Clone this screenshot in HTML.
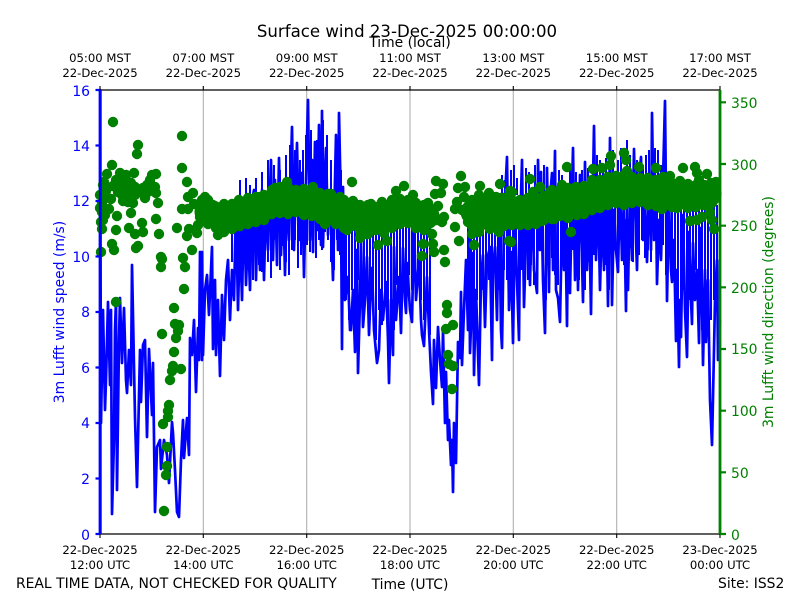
<!DOCTYPE html>
<html><head><meta charset="utf-8"><style>
html,body{margin:0;padding:0;background:#fff}
svg{display:block}
text{font-family:"DejaVu Sans",sans-serif;fill:#000}
.s{font-size:11.65px;text-anchor:middle}
.m{font-size:13.9px}
.b{fill:#00f;font-size:13.9px;text-anchor:end}
.g{fill:#008000;font-size:13.9px}
</style></head><body>
<svg width="800" height="600" viewBox="0 0 800 600" xmlns="http://www.w3.org/2000/svg">
<rect width="800" height="600" fill="#fff"/>
<path d="M203.3 90V534M306.7 90V534M410 90V534M513.3 90V534M616.7 90V534" stroke="#b0b0b0" stroke-width="1.1" fill="none"/>
<path fill="none" stroke="#00f" stroke-width="2.7" stroke-linejoin="round" d="M100 534L100 90 101 423 103 310 105 410 106 380 108 302 110 385 111 310 112 514 114 440 115 330 116 300 117 490 119 340 120 298 122 363 124 308 126 380 127 393 129 350 131 385 132 265 135 417 137 487 140 350 141 402 143 345 145 340 147 437 149 349 152 415 153 363 155 512 157 447 160 440 161 469 164 440 167 455 169 483 172 422 173 433 175 470 177 512 179 517 181 460 183 420 184 458 187 418 189 455 190 338 192 355 194 320 196 392 198 328 199 360 200 252 202 360 202 252 203 355 205 290 207 275 209 315 212 247 213 349 215 280 216 355 218 300 220 376 222 295 224 340 226 280 228 260 230 320 232 270 234 300 236 205 238 310 240 230 242 300 244 203 246 285 248 230 250 290 252 200 254 190 256 280 258 200 260 270 262 190 264 280 266 200 268 250 271 160 273 260 275 180 277 265 279 158 281 255 283 185 285 275 287 190 289 240 292 127 294 250 297 143 299 240 302 173 304 277 306 180 308 100 310 240 312 160 313 252 315 142 317 230 319 125 321 245 322 111 323 247 325 170 326 148 328 235 330 190 333 280 335 180 336 135 338 250 339 113 341 210 342 349 343 187 345 300 348 277 350 330 351 330 353 290 355 352 357 250 358 373 360 300 361 242 363 327 365 300 367 257 369 335 371 280 372 268 374 330 377 363 379 350 381 290 383 320 386 282 388 340 389 383 391 300 393 355 394 247 396 320 399 277 401 333 403 248 405 300 406 313 407 263 410 310 412 322 414 222 416 300 419 260 421 320 422 335 424 346 427 277 429 330 431 372 433 404 434 340 436 388 438 327 440 360 442 387 443 330 445 423 446 372 448 440 449 420 451 465 452 440 453 492 454 423 456 463 458 342 460 358 461 292 462 365 464 310 466 260 468 330 469 232 470 353 472 300 473 253 474 375 476 290 479 385 481 280 483 255 485 327 487 260 490 247 492 360 493 270 495 247 497 320 499 200 501 330 502 348 504 220 507 157 509 310 511 252 513 343 515 220 517 280 519 340 520 230 522 160 524 307 526 240 528 200 530 285 532 190 534 270 537 293 538 160 540 250 541 172 543 280 545 333 547 168 549 292 550 200 552 173 553 270 555 151 556 290 558 298 560 322 562 220 564 270 565 200 567 326 568 230 570 293 572 190 573 148 575 280 577 210 578 290 580 175 582 260 583 302 585 162 587 270 589 200 591 314 592 240 594 126 596 260 598 190 600 290 602 210 604 270 606 180 608 306 610 138 612 305 614 210 616 250 618 272 620 180 622 260 624 200 626 311 627 220 628 290 630 190 632 260 634 149 636 240 637 270 639 180 641 157 643 240 645 200 647 262 649 190 651 250 652 113 654 240 656 200 657 284 659 220 661 260 663 180 665 101 667 301 669 200 671 270 672 282 674 240 676 341 677 270 679 367 680 300 681 337 683 215 685 310 687 357 689 232 691 300 692 324 693 243 695 300 697 270 699 343 701 228 703 365 705 270 706 342 708 280 710 400 712 445 714 350 715 300 717 260 718 360 720 320"/>
<path fill="none" stroke="#00f" stroke-width="2" d="M232 205V262M235 205V250M238 205V275M241 205V255M244 205V240M247 205V270M250 205V250M253 205V280M256 205V245M259 205V265M262 205V272M265 205V248M268 205V262M271 205V278M274 205V240M277 205V258M280 205V270M283 205V246M286 205V262M289 205V275M292 205V250M295 205V240M298 205V268M301 205V255M304 205V270M307 205V245M310 205V252M313 205V235M316 205V258M319 205V240M322 205V250M325 205V232M328 205V240M331 205V262M334 205V270M337 205V240M340 205V255M343 205V285M346 205V300M349 205V320M352 205V290M355 205V330M358 205V280M361 205V270M364 205V315M367 205V285M370 205V320M373 205V300M376 205V340M379 205V310M382 205V325M385 205V295M388 205V350M391 205V305M394 205V330M397 205V285M400 205V315M403 205V290M406 205V300M409 205V275M412 205V290M415 205V265M418 205V280M421 205V300M424 205V320M427 205V285M430 205V335M468 205V280M471 205V310M474 205V330M477 205V300M480 205V340M483 205V290M486 205V300M489 205V280M492 205V320M495 205V270M498 205V290M501 205V300M504 205V270M507 205V280M510 205V300M513 205V310M516 205V265M519 205V300M522 205V270M525 205V260M528 205V280M531 205V265M534 205V285M537 205V260M540 205V250M543 205V275M546 205V300M549 205V262M552 205V258M555 205V275M558 205V285M561 205V262M564 205V250M567 205V290M570 205V268M573 205V250M576 205V270M579 205V280M582 205V255M585 205V290M588 205V262M591 205V280M594 205V255M597 205V245M600 205V270M603 205V255M606 205V265M609 205V290M612 205V280M615 205V250M618 205V260M621 205V240M624 205V265M627 205V285M630 205V248M633 205V262M636 205V245M639 205V255M642 205V240M645 205V258M648 205V250M651 205V262M654 205V240M657 205V270M660 205V250M663 205V245M666 205V275M669 205V255M672 205V270M675 205V300M678 205V320M681 205V310M684 205V290M687 205V320M690 205V300M693 205V280M696 205V270M699 205V310M702 205V330M705 205V300M708 205V290M711 205V320M714 205V300M717 205V290M502 195V175M505 195V180M511 195V170M514 195V165M517 195V178M526 195V168M529 195V172M535 195V165M544 195V165M547 195V168M559 195V170M562 195V175M570 195V165M576 195V172M582 195V170M588 195V168M597 195V155M600 195V160M603 195V170M606 195V158M613 195V150M618 195V160M621 195V148M627 195V140M630 195V155M637 195V160M643 195V165M646 195V155M649 195V150M655 195V148M658 195V150M661 195V165M240 200V180M246 200V178M250 200V185M256 200V178M262 200V172M268 200V160M274 200V165M280 200V170M286 200V155M290 200V145M295 200V150M300 200V160M303 200V150M306 200V135M311 200V130M317 200V140M323 200V120M327 200V135M331 200V160M337 200V145M341 200V170"/>
<path fill="none" stroke="#008000" stroke-width="27" stroke-linejoin="round" stroke-linecap="round" d="M208 212 220 218 240 213 260 209 280 200 300 201 320 205 340 212 360 217 380 220 400 211 420 215 426 216M474 212 500 210 520 212 540 210 560 203 580 202 600 194 620 190 640 191 660 193 680 195 700 196 708 194"/>
<path fill="none" stroke="#008000" stroke-width="10.4" stroke-linecap="round" d="M113 122h0M138 145h0M137 154h0M182 136h0M112 165h0M182 168h0M107 174h0M120 173h0M123 175h0M134 173h0M152 175h0M156 174h0M187 182h0M104 182h0M122 182h0M131 183h0M153 187h0M147 185h0M123 187h0M106 191h0M130 192h0M140 192h0M148 192h0M156 193h0M122 195h0M127 195h0M193 193h0M188 197h0M111 199h0M145 198h0M123 201h0M128 202h0M133 203h0M102 203h0M158 203h0M205 197h0M202 200h0M207 202h0M239 200h0M224 204h0M194 204h0M213 207h0M182 209h0M188 209h0M109 209h0M102 212h0M131 213h0M117 216h0M103 220h0M156 219h0M142 223h0M102 229h0M116 230h0M129 228h0M135 234h0M143 232h0M159 234h0M177 228h0M189 229h0M187 236h0M197 233h0M198 225h0M200 217h0M112 244h0M114 250h0M138 246h0M136 248h0M101 252h0M192 250h0M161 257h0M162 259h0M161 267h0M183 258h0M185 267h0M184 289h0M174 308h0M116 302h0M215 217h0M218 235h0M225 213h0M233 228h0M227 225h0M237 218h0M247 223h0M253 208h0M262 217h0M260 197h0M275 188h0M280 187h0M287 182h0M305 190h0M305 213h0M175 324h0M179 325h0M178 331h0M162 334h0M176 338h0M174 352h0M173 366h0M172 371h0M181 369h0M170 380h0M169 405h0M168 411h0M168 417h0M163 424h0M167 447h0M167 466h0M166 475h0M164 511h0M304 191h0M313 187h0M352 182h0M404 186h0M396 191h0M413 195h0M436 181h0M443 184h0M435 194h0M441 193h0M438 206h0M428 203h0M461 176h0M458 188h0M465 187h0M464 197h0M457 202h0M480 186h0M500 184h0M510 191h0M489 193h0M479 195h0M501 198h0M511 204h0M455 209h0M462 210h0M472 210h0M483 212h0M502 213h0M444 217h0M437 220h0M442 222h0M477 222h0M468 222h0M455 227h0M490 229h0M499 232h0M472 234h0M479 232h0M459 241h0M474 245h0M509 241h0M444 250h0M434 252h0M433 244h0M432 234h0M423 244h0M422 256h0M445 262h0M447 305h0M387 241h0M378 245h0M365 234h0M360 238h0M347 230h0M325 224h0M371 204h0M382 202h0M353 201h0M331 194h0M340 197h0M447 313h0M453 325h0M446 329h0M448 355h0M449 364h0M453 366h0M452 389h0M624 153h0M611 156h0M626 160h0M567 167h0M683 168h0M695 167h0M593 169h0M602 168h0M610 165h0M707 174h0M530 179h0M656 168h0M639 167h0M627 171h0M670 176h0M663 177h0M697 173h0M716 182h0M711 183h0M699 180h0M679 184h0M562 185h0M540 187h0M512 192h0M533 192h0M550 192h0M555 192h0M577 192h0M583 188h0M617 185h0M710 204h0M690 221h0M697 220h0M702 217h0M712 220h0M714 229h0M710 212h0M571 232h0M511 242h0M528 225h0M542 221h0M554 219h0M577 215h0M662 209h0M677 208h0M619 198h0M637 193h0M650 198h0M692 203h0M116 180h0M118 186h0M126 180h0M128 186h0M135 187h0M118 192h0M135 195h0M125 190h0M113 186h0M126 175h0M150 180h0M155 187h0M143 188h0M103 185h0M100 195h0M103 200h0M100 208h0M105 215h0M101 222h0M208 200h0M208 224h0M216 208h0M216 228h0M224 207h0M224 232h0M232 204h0M232 229h0M240 201h0M240 226h0M248 198h0M248 224h0M256 197h0M256 222h0M264 195h0M264 220h0M272 190h0M272 214h0M280 188h0M280 213h0M288 187h0M288 214h0M296 190h0M296 212h0M304 189h0M304 215h0M312 191h0M312 216h0M320 193h0M320 219h0M328 194h0M328 221h0M336 199h0M336 224h0M344 200h0M344 228h0M352 203h0M352 226h0M360 205h0M360 231h0M368 205h0M368 234h0M376 207h0M376 230h0M384 205h0M384 233h0M392 200h0M392 228h0M400 199h0M400 224h0M408 200h0M408 223h0M416 203h0M416 228h0M424 205h0M424 230h0M472 200h0M472 226h0M480 197h0M480 227h0M488 198h0M488 224h0M496 197h0M496 225h0M504 198h0M504 226h0M512 200h0M512 225h0M520 200h0M520 225h0M528 198h0M528 222h0M536 197h0M536 224h0M544 196h0M544 220h0M552 190h0M552 219h0M560 190h0M560 216h0M568 188h0M568 218h0M576 187h0M576 213h0M584 186h0M584 214h0M592 180h0M592 210h0M600 180h0M600 208h0M608 177h0M608 205h0M616 176h0M616 203h0M624 175h0M624 205h0M632 177h0M632 203h0M640 178h0M640 202h0M648 178h0M648 205h0M656 180h0M656 206h0M664 182h0M664 204h0M672 183h0M672 207h0M680 181h0M680 205h0M688 184h0M688 208h0M696 185h0M696 207h0M704 185h0M704 205h0M712 187h0M712 203h0"/>
<path d="M100 90H720M100 534H720" stroke="#000" stroke-width="1.2" fill="none"/>
<path d="M100 90V86M203.3 90V86M306.7 90V86M410 90V86M513.3 90V86M616.7 90V86M720 90V86M100 534V538M203.3 534V538M306.7 534V538M410 534V538M513.3 534V538M616.7 534V538M720 534V538" stroke="#000" stroke-width="1.1" fill="none"/>
<path d="M100.3 90V534" stroke="#00f" stroke-width="2.8" fill="none"/>
<path d="M720 90V534" stroke="#008000" stroke-width="2.8" fill="none"/>
<path d="M95.5 90H100M95.5 145.5H100M95.5 201H100M95.5 256.5H100M95.5 312H100M95.5 367.5H100M95.5 423H100M95.5 478.5H100M95.5 534H100" stroke="#00f" stroke-width="2.2" fill="none"/>
<path d="M720 102.3H726M720 164H726M720 225.7H726M720 287.3H726M720 349H726M720 410.7H726M720 472.3H726M720 534H726" stroke="#008000" stroke-width="2.2" fill="none"/>
<text class="b" x="90" y="96">16</text><text class="b" x="90" y="151">14</text><text class="b" x="90" y="206">12</text><text class="b" x="90" y="262">10</text><text class="b" x="90" y="317">8</text><text class="b" x="90" y="373">6</text><text class="b" x="90" y="428">4</text><text class="b" x="90" y="484">2</text><text class="b" x="90" y="540">0</text>
<text class="g" x="731" y="108">350</text><text class="g" x="731" y="170">300</text><text class="g" x="731" y="231">250</text><text class="g" x="731" y="293">200</text><text class="g" x="731" y="354">150</text><text class="g" x="731" y="416">100</text><text class="g" x="731" y="478">50</text><text class="g" x="731" y="540">0</text>
<text x="407" y="37" style="font-size:16.6px;text-anchor:middle">Surface wind 23-Dec-2025 00:00:00</text>
<text class="m" x="410" y="47" text-anchor="middle">Time (local)</text>
<g>
<text class="s" x="100" y="62">05:00 MST</text><text class="s" x="100" y="77">22-Dec-2025</text>
<text class="s" x="203.3" y="62">07:00 MST</text><text class="s" x="203.3" y="77">22-Dec-2025</text>
<text class="s" x="306.7" y="62">09:00 MST</text><text class="s" x="306.7" y="77">22-Dec-2025</text>
<text class="s" x="410" y="62">11:00 MST</text><text class="s" x="410" y="77">22-Dec-2025</text>
<text class="s" x="513.3" y="62">13:00 MST</text><text class="s" x="513.3" y="77">22-Dec-2025</text>
<text class="s" x="616.7" y="62">15:00 MST</text><text class="s" x="616.7" y="77">22-Dec-2025</text>
<text class="s" x="720" y="62">17:00 MST</text><text class="s" x="720" y="77">22-Dec-2025</text>
</g>
<g>
<text class="s" x="100" y="554">22-Dec-2025</text><text class="s" x="100" y="569">12:00 UTC</text>
<text class="s" x="203.3" y="554">22-Dec-2025</text><text class="s" x="203.3" y="569">14:00 UTC</text>
<text class="s" x="306.7" y="554">22-Dec-2025</text><text class="s" x="306.7" y="569">16:00 UTC</text>
<text class="s" x="410" y="554">22-Dec-2025</text><text class="s" x="410" y="569">18:00 UTC</text>
<text class="s" x="513.3" y="554">22-Dec-2025</text><text class="s" x="513.3" y="569">20:00 UTC</text>
<text class="s" x="616.7" y="554">22-Dec-2025</text><text class="s" x="616.7" y="569">22:00 UTC</text>
<text class="s" x="720" y="554">23-Dec-2025</text><text class="s" x="720" y="569">00:00 UTC</text>
</g>
<text class="m" x="16" y="588">REAL TIME DATA, NOT CHECKED FOR QUALITY</text>
<text class="m" x="410" y="589" text-anchor="middle">Time (UTC)</text>
<text class="m" x="718" y="588">Site: ISS2</text>
<text class="b" style="text-anchor:middle" transform="translate(64 312) rotate(-90)">3m Lufft wind speed (m/s)</text>
<text class="g" style="text-anchor:middle" transform="translate(773 312) rotate(-90)">3m Lufft wind direction (degrees)</text>
</svg>
</body></html>
